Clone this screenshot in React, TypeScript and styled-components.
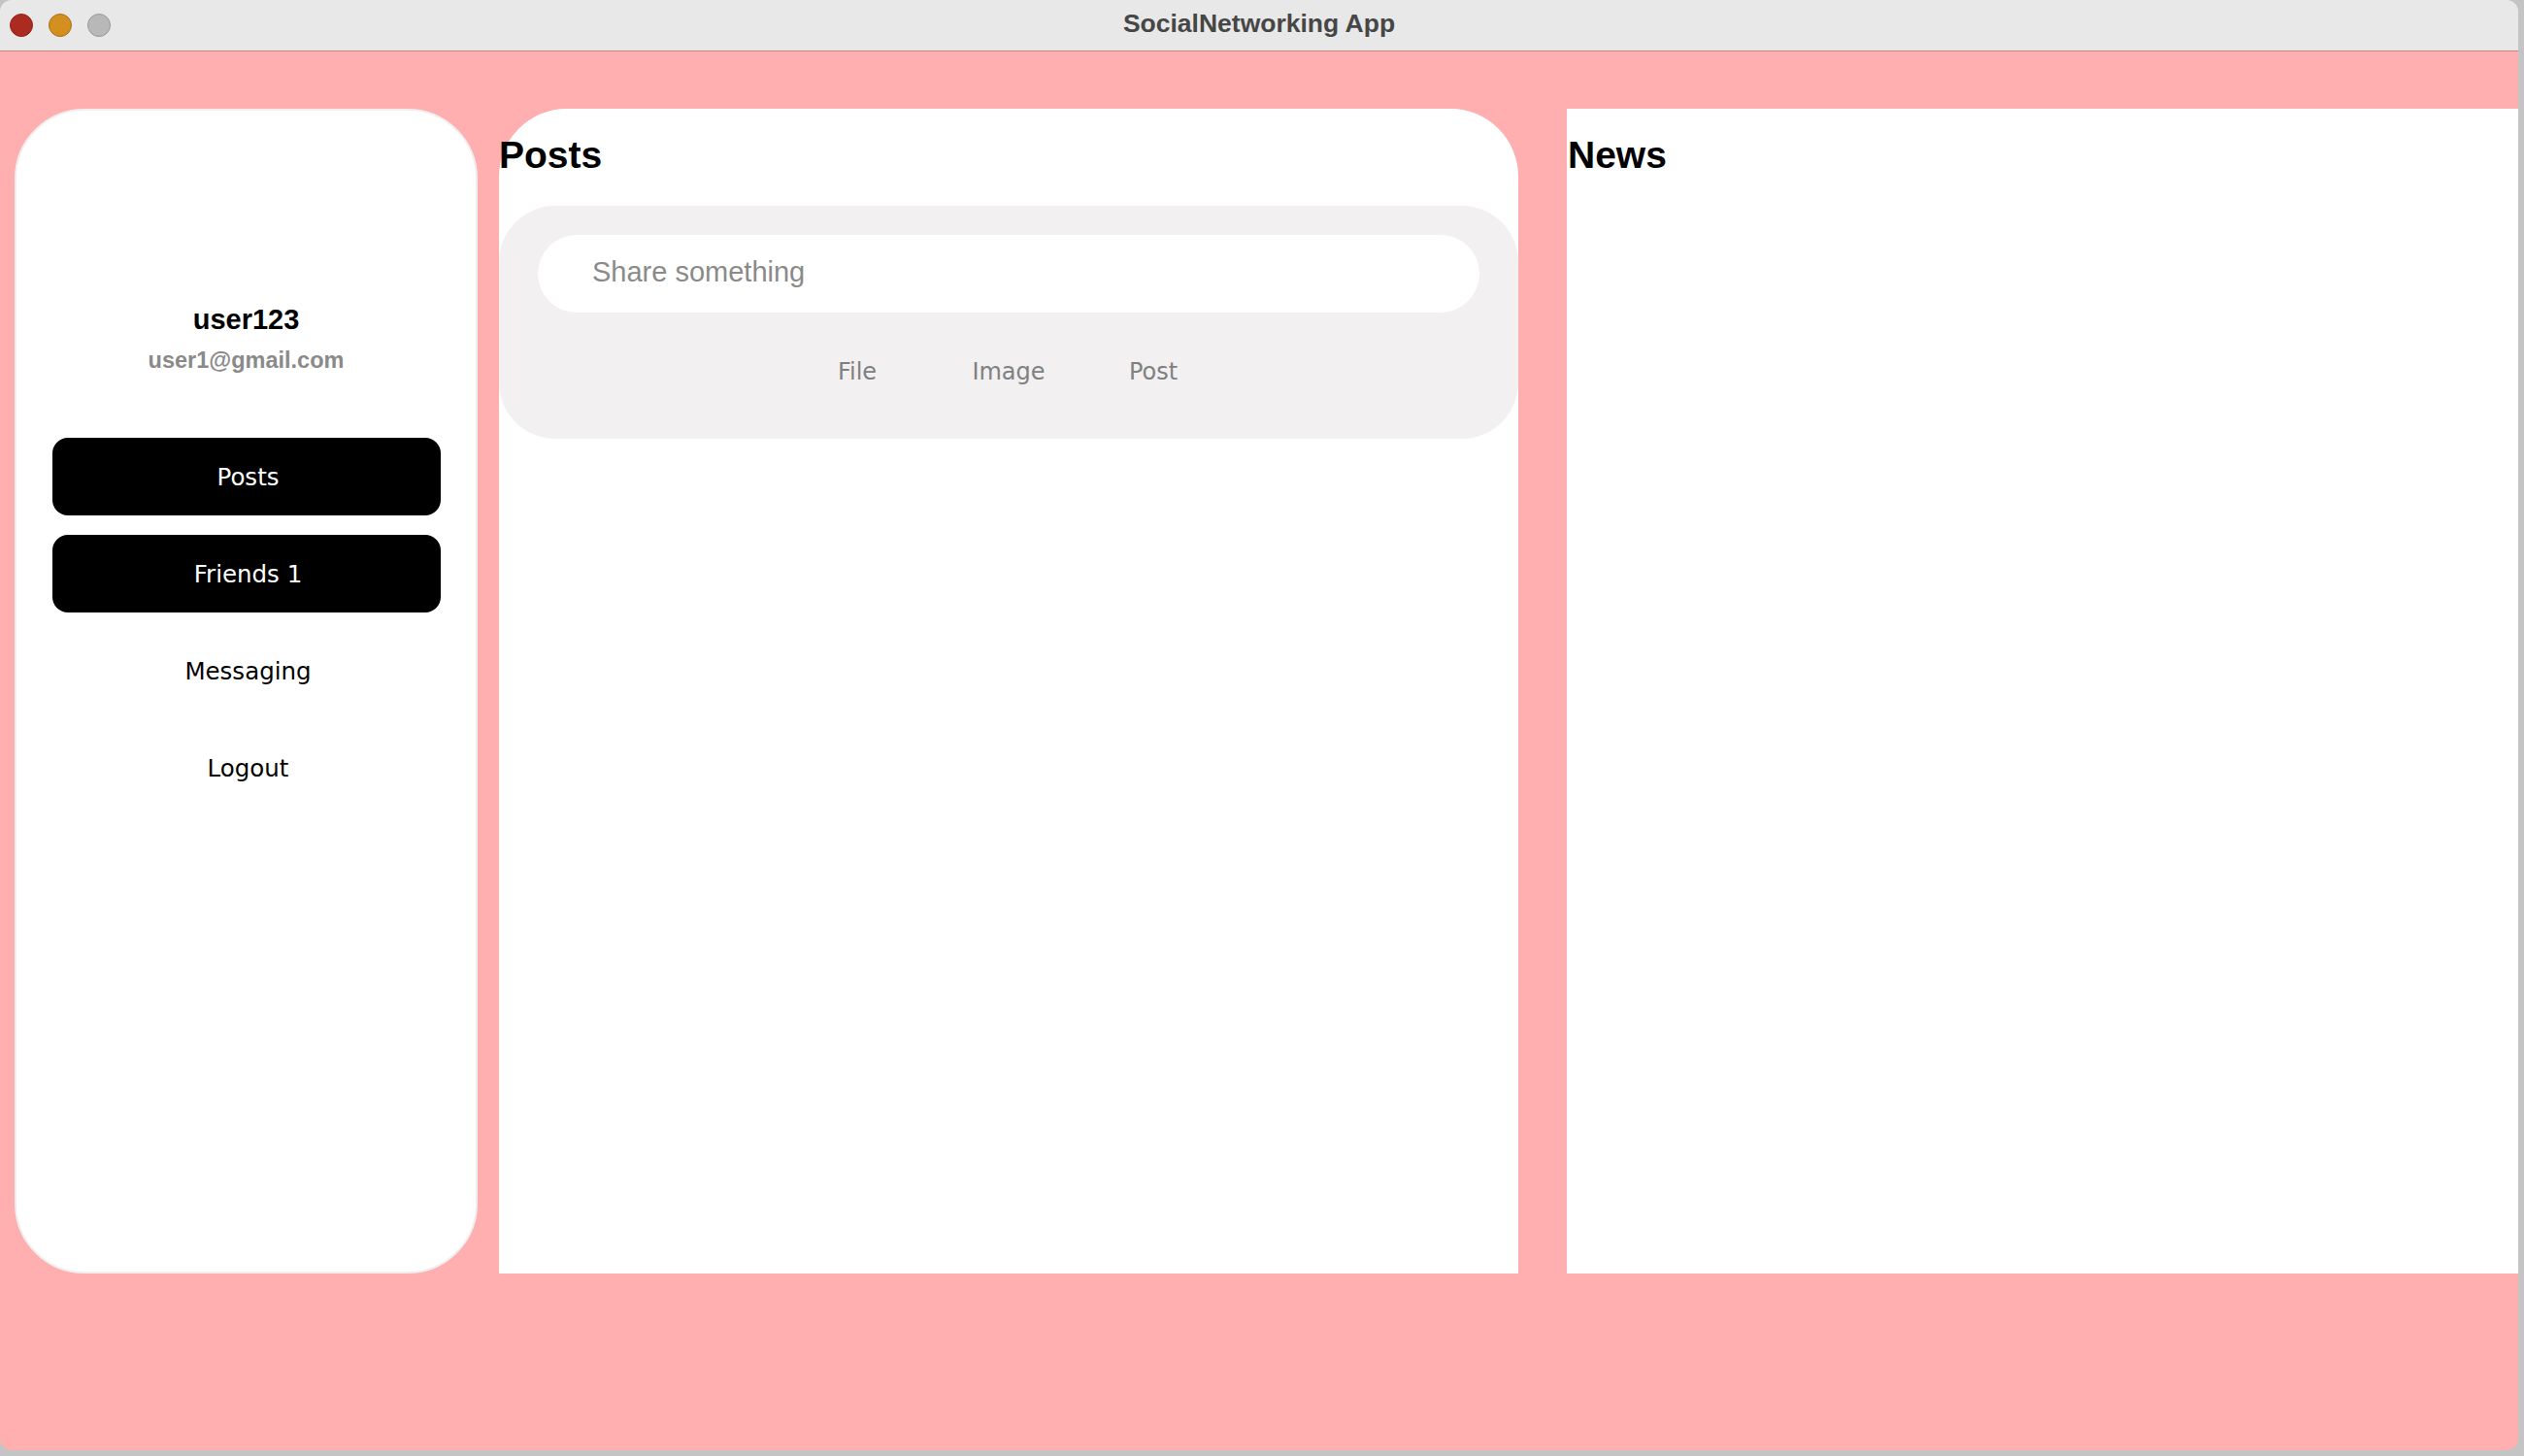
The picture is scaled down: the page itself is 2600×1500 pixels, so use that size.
import React from 'react';
import styled, { createGlobalStyle } from 'styled-components';

const GlobalStyle = createGlobalStyle`
  html, body {
    margin: 0;
    padding: 0;
    background: #c4c4c4;
  }

  * {
    box-sizing: border-box;
  }
`;

const Window = styled.div`
  width: 2594px;
  height: 1494px;
  display: flex;
  flex-direction: column;
  border-radius: 12px;
  overflow: hidden;
  background: #ffafaf;
`;

const TitleBar = styled.div`
  height: 53px;
  flex-shrink: 0;
  display: grid;
  grid-template-columns: 1fr auto 1fr;
  align-items: center;
  padding-bottom: 4px;
  background: #e8e8e8;
  border-bottom: 1px solid #c98585;
`;

const Lights = styled.div`
  display: flex;
  gap: 16px;
  padding: 4px 0 0 10px;
`;

const Light = styled.span<{ fill: string; edge: string }>`
  width: 24px;
  height: 24px;
  border-radius: 50%;
  background: ${({ fill }) => fill};
  border: 1px solid ${({ edge }) => edge};
`;

const WindowTitle = styled.div`
  font-family: "Liberation Sans", Arial, sans-serif;
  font-weight: bold;
  font-size: 26.5px;
  color: #464646;
`;

const Content = styled.div`
  flex: 1;
  display: flex;
  align-items: flex-start;
  padding: 59px 0 0 15px;
`;

const Sidebar = styled.div`
  width: 477px;
  height: 1200px;
  display: flex;
  flex-direction: column;
  align-items: center;
  padding-top: 198px;
  background: #fff;
  border: 2px solid #efefef;
  border-radius: 72px;
`;

const UserName = styled.div`
  font-family: "Liberation Sans", Arial, sans-serif;
  font-weight: bold;
  font-size: 29px;
  line-height: 34px;
  color: #000;
`;

const UserEmail = styled.div`
  margin-top: 11px;
  font-family: "Liberation Sans", Arial, sans-serif;
  font-weight: bold;
  font-size: 23.5px;
  line-height: 28px;
  color: #8a8a8a;
`;

const Nav = styled.div`
  margin-top: 66px;
  display: flex;
  flex-direction: column;
  gap: 20px;
`;

const NavButton = styled.button<{ active?: boolean }>`
  width: 400px;
  height: 80px;
  padding: 0 0 0 4px;
  border: none;
  border-radius: 16px;
  background: ${({ active }) => (active ? '#000' : '#fff')};
  color: ${({ active }) => (active ? '#fff' : '#000')};
  font-family: "DejaVu Sans", Verdana, sans-serif;
  font-size: 24.5px;
  cursor: pointer;
`;

const PostsPanel = styled.div`
  margin-left: 22px;
  width: 1050px;
  height: 1200px;
  padding-top: 28px;
  background: #fff;
  border-radius: 70px 70px 0 0;
`;

const NewsPanel = styled.div`
  margin-left: 50px;
  flex: 1;
  height: 1200px;
  padding: 28px 0 0 1px;
  background: #fff;
`;

const Heading = styled.h2`
  margin: 0;
  font-family: "Liberation Sans", Arial, sans-serif;
  font-weight: bold;
  font-size: 39px;
  line-height: 39px;
  color: #000;
`;

const Composer = styled.div`
  margin-top: 33px;
  height: 240px;
  padding: 30px 40px 0;
  background: #f2f0f1;
  border-radius: 58px;
`;

const ShareInput = styled.input`
  width: 100%;
  height: 80px;
  padding: 0 0 4px 56px;
  border: none;
  border-radius: 40px;
  background: #fff;
  outline: none;
  font-family: "Liberation Sans", Arial, sans-serif;
  font-size: 29px;
  color: #333;

  &::placeholder {
    color: #8a8a8a;
  }
`;

const Actions = styled.div`
  margin-top: 36px;
  padding-right: 14px;
  display: flex;
  justify-content: center;
`;

const ActionButton = styled.button<{ w: number }>`
  width: ${({ w }) => w}px;
  height: 50px;
  padding: 0;
  border: none;
  background: transparent;
  font-family: "DejaVu Sans", Verdana, sans-serif;
  font-size: 24px;
  color: #808080;
  cursor: pointer;
`;

export default function App() {
  return (
    <>
      <GlobalStyle />
      <Window>
        <TitleBar>
          <Lights>
            <Light fill="#ac2b21" edge="#8e2219" />
            <Light fill="#d38f1f" edge="#a87019" />
            <Light fill="#b8b8b8" edge="#989898" />
          </Lights>
          <WindowTitle>SocialNetworking App</WindowTitle>
          <div />
        </TitleBar>
        <Content>
          <Sidebar>
            <UserName>user123</UserName>
            <UserEmail>user1@gmail.com</UserEmail>
            <Nav>
              <NavButton active>Posts</NavButton>
              <NavButton active>Friends 1</NavButton>
              <NavButton>Messaging</NavButton>
              <NavButton>Logout</NavButton>
            </Nav>
          </Sidebar>
          <PostsPanel>
            <Heading>Posts</Heading>
            <Composer>
              <ShareInput placeholder="Share something" />
              <Actions>
                <ActionButton w={162}>File</ActionButton>
                <ActionButton w={150}>Image</ActionButton>
                <ActionButton w={148}>Post</ActionButton>
              </Actions>
            </Composer>
          </PostsPanel>
          <NewsPanel>
            <Heading>News</Heading>
          </NewsPanel>
        </Content>
      </Window>
    </>
  );
}
